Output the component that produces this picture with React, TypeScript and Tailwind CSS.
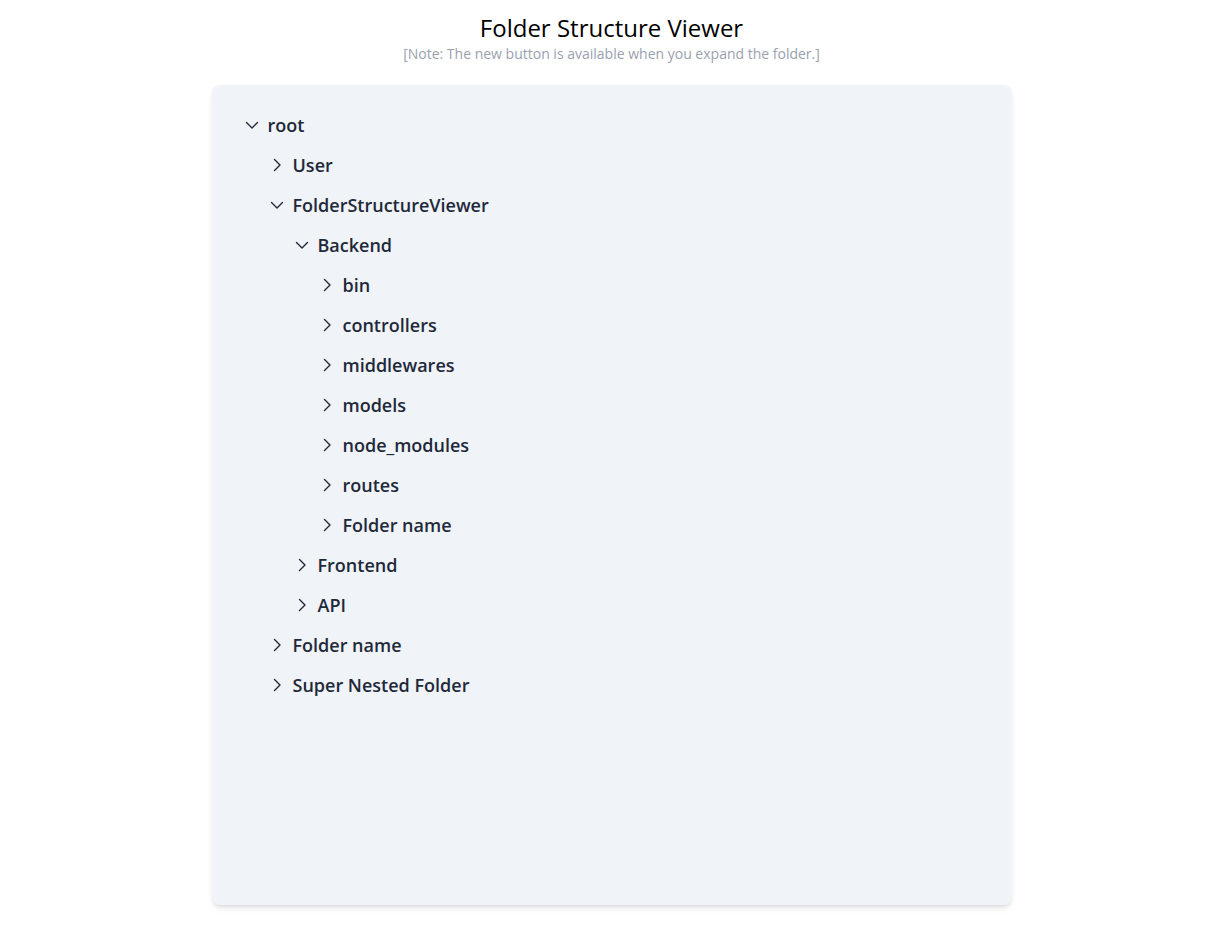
import React, { useState } from 'react';

type Node = { name: string; open?: boolean; children?: Node[] };

const tree: Node = {
  name: 'root',
  open: true,
  children: [
    { name: 'User', children: [] },
    {
      name: 'FolderStructureViewer',
      open: true,
      children: [
        {
          name: 'Backend',
          open: true,
          children: [
            { name: 'bin', children: [] },
            { name: 'controllers', children: [] },
            { name: 'middlewares', children: [] },
            { name: 'models', children: [] },
            { name: 'node_modules', children: [] },
            { name: 'routes', children: [] },
            { name: 'Folder name', children: [] },
          ],
        },
        { name: 'Frontend', children: [] },
        { name: 'API', children: [] },
      ],
    },
    { name: 'Folder name', children: [] },
    { name: 'Super Nested Folder', children: [] },
  ],
};

const Chevron: React.FC<{ open: boolean }> = ({ open }) => (
  <svg
    width="16"
    height="16"
    viewBox="0 0 16 16"
    fill="none"
    stroke="#1f2937"
    strokeWidth="1.4"
    strokeLinecap="round"
    strokeLinejoin="round"
  >
    {open ? <path d="M2.5 5.5 8 11l5.5-5.5" /> : <path d="M5.5 2.5 11 8l-5.5 5.5" />}
  </svg>
);

const Folder: React.FC<{ node: Node }> = ({ node }) => {
  const [open, setOpen] = useState(!!node.open);
  return (
    <div>
      <div
        className="flex items-center h-10 cursor-pointer select-none"
        onClick={() => setOpen(!open)}
      >
        <span className="w-4 flex items-center justify-center">
          <Chevron open={open} />
        </span>
        <span className="ml-2 text-lg font-semibold text-gray-800">{node.name}</span>
      </div>
      {open && node.children && (
        <div className="pl-[25px]">
          {node.children.map((c, i) => (
            <Folder key={c.name + i} node={c} />
          ))}
        </div>
      )}
    </div>
  );
};

const App: React.FC = () => {
  return (
    <div
      className="min-h-screen bg-white flex flex-col items-center pt-3"
      style={{ fontFamily: '"Open Sans", "Noto Sans", sans-serif' }}
    >
      <h1 className="text-2xl leading-8 text-black">Folder Structure Viewer</h1>
      <p className="text-sm leading-5 text-gray-400">
        [Note: The new button is available when you expand the folder.]
      </p>
      <div className="mt-[21px] w-[800px] h-[820px] bg-[#f0f3f8] rounded-lg shadow-md pt-5 pl-8">
        <Folder node={tree} />
      </div>
    </div>
  );
};

export default App;
